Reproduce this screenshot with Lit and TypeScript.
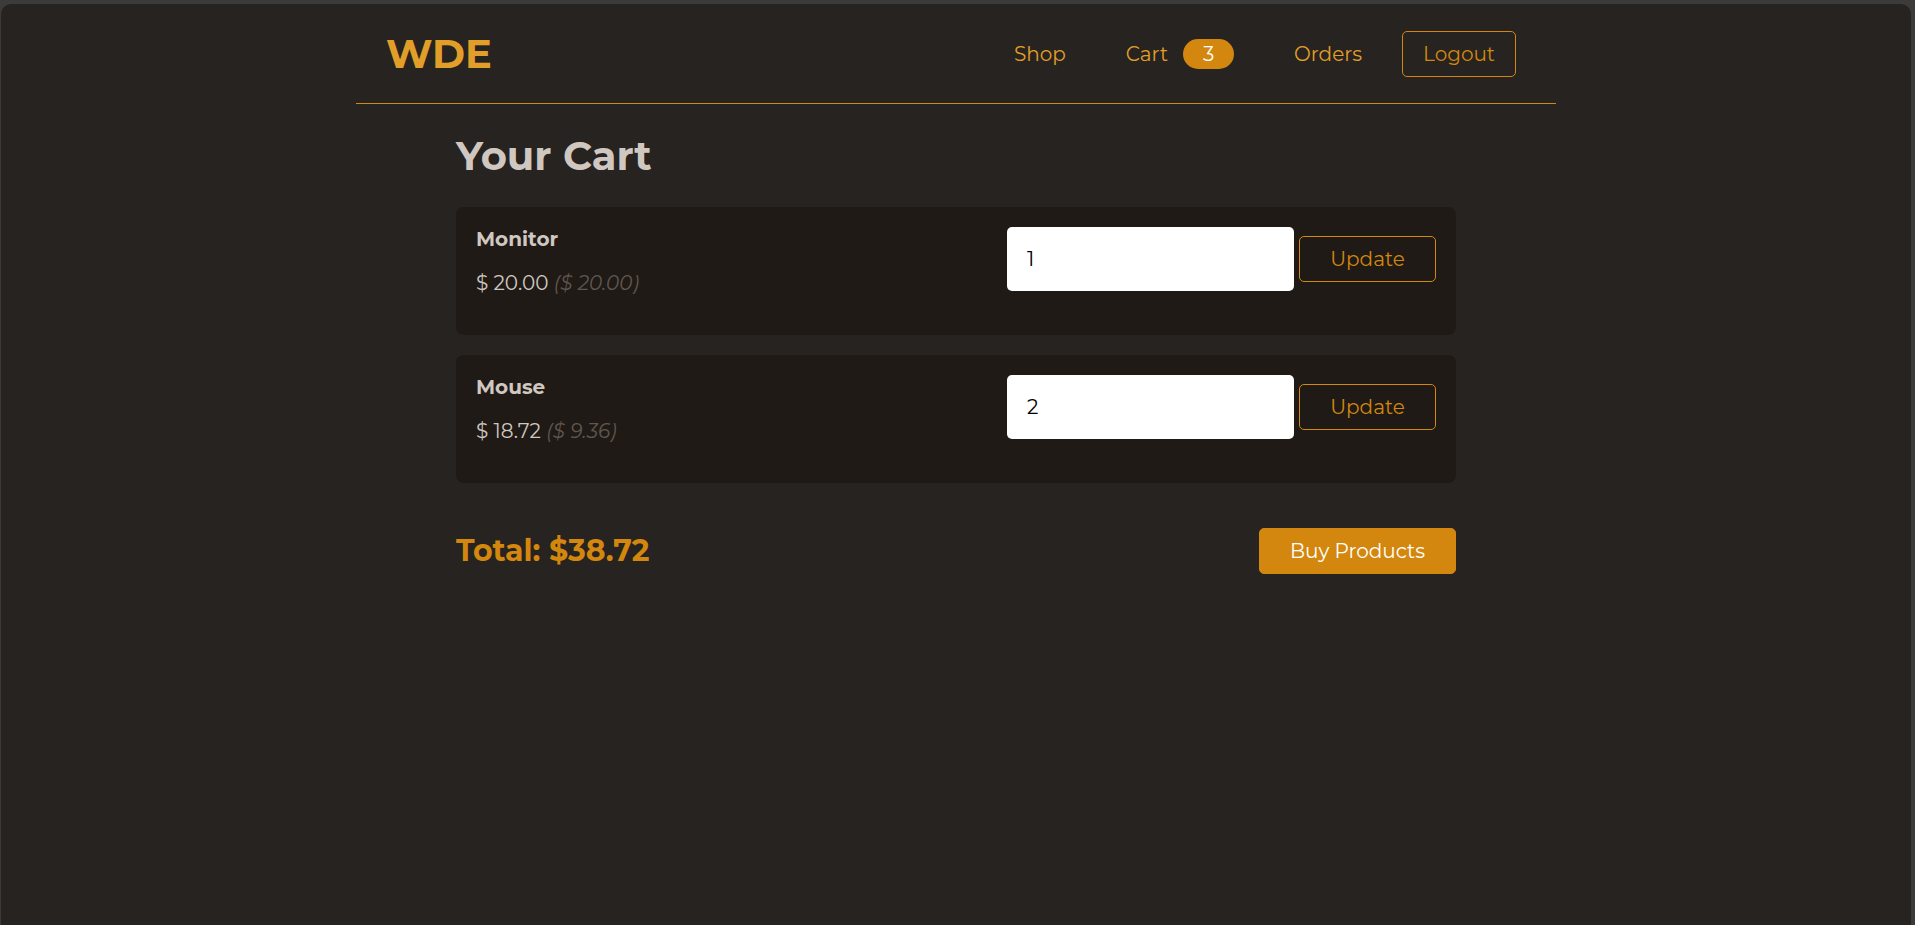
import { LitElement, html, css } from "lit";
import { customElement, property, state } from "lit/decorators.js";

interface CartItem {
  id: string;
  title: string;
  price: number;
  quantity: number;
}

const money = (value: number) => value.toFixed(2);

@customElement("shop-header")
export class ShopHeader extends LitElement {
  @property({ type: Number }) count = 0;

  static styles = css`
    :host {
      display: block;
    }
    .bar {
      box-sizing: border-box;
      width: 100%;
      max-width: 1200px;
      height: 100px;
      margin: 0 auto;
      padding: 0 30px;
      display: flex;
      align-items: center;
      justify-content: space-between;
      border-bottom: 1px solid #cd8a1a;
    }
    .logo {
      color: #e19f29;
      font-size: 40px;
      line-height: 48px;
      font-weight: 700;
      text-decoration: none;
    }
    .items {
      list-style: none;
      margin: 0;
      padding: 0;
      display: flex;
      align-items: center;
    }
    .item {
      margin: 0 10px;
    }
    .link {
      display: flex;
      align-items: center;
      gap: 15px;
      padding: 8px 20px;
      color: #e19f29;
      line-height: 30px;
      text-decoration: none;
    }
    .badge {
      min-width: 51px;
      border-radius: 15px;
      background: #d3870e;
      color: #ffffff;
      text-align: center;
    }
    .logout {
      box-sizing: border-box;
      min-width: 114px;
      height: 46px;
      padding: 0 20px;
      border: 1px solid #d3870e;
      border-radius: 5px;
      background: transparent;
      color: #d3870e;
      font: inherit;
      cursor: pointer;
    }
  `;

  render() {
    return html`
      <header class="bar">
        <a class="logo" href="#">WDE</a>
        <nav>
          <ul class="items">
            <li class="item"><a class="link" href="#shop">Shop</a></li>
            <li class="item">
              <a class="link" href="#cart">Cart<span class="badge">${this.count}</span></a>
            </li>
            <li class="item"><a class="link" href="#orders">Orders</a></li>
            <li class="item"><button class="logout" type="button">Logout</button></li>
          </ul>
        </nav>
      </header>
    `;
  }
}

@customElement("cart-item")
export class CartItemRow extends LitElement {
  @property({ attribute: false }) item!: CartItem;

  static styles = css`
    :host {
      display: block;
    }
    .card {
      display: flex;
      justify-content: space-between;
      align-items: flex-start;
      padding: 20px;
      border-radius: 8px;
      background: #1f1a16;
    }
    .title {
      margin: 0 0 20px;
      font-size: 20px;
      line-height: 24px;
      font-weight: 700;
    }
    .price {
      margin: 0 0 20px;
      line-height: 24px;
    }
    .unit {
      color: #5f564e;
      font-style: italic;
    }
    .form {
      display: flex;
      align-items: center;
      gap: 5px;
    }
    .quantity {
      box-sizing: border-box;
      width: 287px;
      height: 64px;
      padding: 0 20px;
      border: none;
      border-radius: 5px;
      background: #ffffff;
      color: #000000;
      font: inherit;
      appearance: textfield;
    }
    .update {
      box-sizing: border-box;
      min-width: 137px;
      height: 46px;
      padding: 0 30px;
      border: 1px solid #d3870e;
      border-radius: 5px;
      background: transparent;
      color: #d3870e;
      font: inherit;
      cursor: pointer;
    }
  `;

  private submit(event: Event) {
    event.preventDefault();
    const input = this.renderRoot.querySelector("input")!;
    this.dispatchEvent(
      new CustomEvent("quantity-change", {
        detail: { id: this.item.id, quantity: Math.max(0, Number(input.value)) },
      }),
    );
  }

  render() {
    const { title, price, quantity } = this.item;
    return html`
      <article class="card">
        <div>
          <h2 class="title">${title}</h2>
          <p class="price">
            $ ${money(price * quantity)} <span class="unit">($ ${money(price)})</span>
          </p>
        </div>
        <form class="form" @submit=${this.submit}>
          <input
            class="quantity"
            type="number"
            min="0"
            aria-label="Quantity"
            .value=${String(quantity)}
          />
          <button class="update" type="submit">Update</button>
        </form>
      </article>
    `;
  }
}

@customElement("app-root")
export class AppRoot extends LitElement {
  @state() private items: CartItem[] = [
    { id: "monitor", title: "Monitor", price: 20, quantity: 1 },
    { id: "mouse", title: "Mouse", price: 9.36, quantity: 2 },
  ];

  static styles = css`
    :host {
      box-sizing: border-box;
      display: flex;
      min-height: 100vh;
      padding: 4px 4px 0 1px;
      background: #3b3b3b;
      color: #d0c8c0;
      font-family: Montserrat, Inter, sans-serif;
      font-size: 20px;
    }
    .page {
      flex: 1;
      border-radius: 10px 10px 0 0;
      background: #272320;
    }
    .cart {
      width: 100%;
      max-width: 1000px;
      margin: 0 auto;
      padding: 28px 0;
    }
    .heading {
      margin: 0 0 27px;
      font-size: 40px;
      line-height: 48px;
      font-weight: 700;
    }
    .list {
      list-style: none;
      margin: 0 0 45px;
      padding: 0;
      display: flex;
      flex-direction: column;
      gap: 20px;
    }
    .summary {
      display: flex;
      align-items: center;
      justify-content: space-between;
    }
    .total {
      margin: 0;
      color: #d3870e;
      font-size: 30px;
      line-height: 38px;
      font-weight: 700;
    }
    .buy {
      box-sizing: border-box;
      min-width: 197px;
      height: 46px;
      padding: 0 30px;
      border: 1px solid #d3870e;
      border-radius: 5px;
      background: #d3870e;
      color: #ffffff;
      font: inherit;
      cursor: pointer;
    }
  `;

  private changeQuantity(event: CustomEvent<{ id: string; quantity: number }>) {
    const { id, quantity } = event.detail;
    this.items = this.items
      .map((item) => (item.id === id ? { ...item, quantity } : item))
      .filter((item) => item.quantity > 0);
  }

  render() {
    const count = this.items.reduce((sum, item) => sum + item.quantity, 0);
    const total = this.items.reduce((sum, item) => sum + item.quantity * item.price, 0);
    return html`
      <div class="page">
        <shop-header .count=${count}></shop-header>
        <main class="cart">
          <h1 class="heading">Your Cart</h1>
          <ul class="list">
            ${this.items.map(
              (item) => html`
                <li>
                  <cart-item .item=${item} @quantity-change=${this.changeQuantity}></cart-item>
                </li>
              `,
            )}
          </ul>
          <div class="summary">
            <p class="total">Total: $${money(total)}</p>
            <button class="buy" type="button">Buy Products</button>
          </div>
        </main>
      </div>
    `;
  }
}
